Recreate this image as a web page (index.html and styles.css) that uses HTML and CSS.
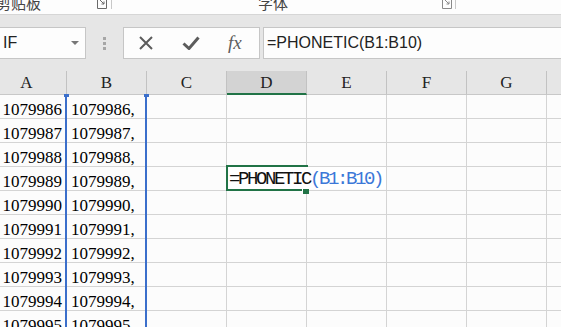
FILE: index.html
```html
<!DOCTYPE html>
<html lang="zh-CN">
<head>
    <meta charset="UTF-8">
    <title>PHONETIC</title>
    <link rel="stylesheet" href="styles.css">
</head>
<body>
    <div class="ribbon">
        <div class="group group-clip">
            <span class="group-label">剪贴板</span>
            <svg class="launcher" width="10" height="9" viewBox="0 0 10 9"><path d="M0.5 0 V8.5 H9.5 V0 M3 0 L7 4 M7 1.5 V4 H4.5" fill="none" stroke="#6a6a6a" stroke-width="1"/></svg>
            <span class="sep"></span>
        </div>
        <div class="group group-font">
            <span class="group-label">字体</span>
            <svg class="launcher" width="10" height="9" viewBox="0 0 10 9"><path d="M0.5 0 V8.5 H9.5 V0 M3 0 L7 4 M7 1.5 V4 H4.5" fill="none" stroke="#8a8a8a" stroke-width="1"/></svg>
            <span class="sep"></span>
        </div>
    </div>

    <div class="formula-bar">
        <div class="name-box">
            <span>IF</span>
            <span class="caret"></span>
        </div>
        <div class="grip"><i></i><i></i><i></i></div>
        <div class="fx-box">
            <svg class="icon-cancel" width="14" height="14" viewBox="0 0 14 14"><path d="M1 1 L13 13 M13 1 L1 13" stroke="#5c5c5c" stroke-width="2"/></svg>
            <svg class="icon-enter" width="18" height="14" viewBox="0 0 18 14"><path d="M1.5 7.5 L7 12.5 L16.5 1.5" fill="none" stroke="#5c5c5c" stroke-width="3"/></svg>
            <span class="fx">fx</span>
        </div>
        <div class="formula-input">=PHONETIC(B1:B10)</div>
    </div>

    <div class="sheet">
        <div class="hd hd-a">A</div>
        <div class="hd">B</div>
        <div class="hd">C</div>
        <div class="hd hd-active">D</div>
        <div class="hd">E</div>
        <div class="hd">F</div>
        <div class="hd">G</div>
        <div class="hd"></div>

        <div class="cell num">1079986</div><div class="cell">1079986,</div><div class="cell"></div><div class="cell"></div><div class="cell"></div><div class="cell"></div><div class="cell"></div><div class="cell"></div>
        <div class="cell num">1079987</div><div class="cell">1079987,</div><div class="cell"></div><div class="cell"></div><div class="cell"></div><div class="cell"></div><div class="cell"></div><div class="cell"></div>
        <div class="cell num">1079988</div><div class="cell">1079988,</div><div class="cell"></div><div class="cell"></div><div class="cell"></div><div class="cell"></div><div class="cell"></div><div class="cell"></div>
        <div class="cell num">1079989</div><div class="cell">1079989,</div><div class="cell"></div><div class="cell"></div><div class="cell"></div><div class="cell"></div><div class="cell"></div><div class="cell"></div>
        <div class="cell num">1079990</div><div class="cell">1079990,</div><div class="cell"></div><div class="cell"></div><div class="cell"></div><div class="cell"></div><div class="cell"></div><div class="cell"></div>
        <div class="cell num">1079991</div><div class="cell">1079991,</div><div class="cell"></div><div class="cell"></div><div class="cell"></div><div class="cell"></div><div class="cell"></div><div class="cell"></div>
        <div class="cell num">1079992</div><div class="cell">1079992,</div><div class="cell"></div><div class="cell"></div><div class="cell"></div><div class="cell"></div><div class="cell"></div><div class="cell"></div>
        <div class="cell num">1079993</div><div class="cell">1079993,</div><div class="cell"></div><div class="cell"></div><div class="cell"></div><div class="cell"></div><div class="cell"></div><div class="cell"></div>
        <div class="cell num">1079994</div><div class="cell">1079994,</div><div class="cell"></div><div class="cell"></div><div class="cell"></div><div class="cell"></div><div class="cell"></div><div class="cell"></div>
        <div class="cell num">1079995</div><div class="cell">1079995,</div><div class="cell"></div><div class="cell"></div><div class="cell"></div><div class="cell"></div><div class="cell"></div><div class="cell"></div>

        <!-- range B1:B10 referenced by the formula -->
        <div class="range"></div>

        <!-- cell D4 in edit mode -->
        <div class="edit">
            <div class="edit-text">=PHONETIC<span class="ref">(B1:B10)</span></div>
        </div>
        <div class="fill-handle"></div>
    </div>
</body>
</html>
```

FILE: styles.css
```css
body {
    margin: 0;
    width: 561px;
    height: 327px;
    overflow: hidden;
    background-color: #e6e6e6;
    font-family: "Liberation Sans", Arial, sans-serif;
}

/* ribbon strip (cut off at the top) */
.ribbon {
    display: flex;
    height: 14px;
    background: #fdfdfd;
    border-bottom: 1px solid #d6d6d6;
    overflow: hidden;
}

.group {
    display: flex;
    align-items: flex-start;
    height: 14px;
}

.group-clip {
    width: 112px;
}

.group-font {
    width: 344px;
    padding-left: 146px;
    box-sizing: border-box;
}

.group-label {
    margin-top: -7px;
    font-family: "Noto Sans CJK SC", sans-serif;
    font-size: 15px;
    line-height: 20px;
    color: #444;
    white-space: nowrap;
}

.group-clip .group-label {
    margin-left: -4px;
}

.launcher {
    margin-left: auto;
    margin-right: 4px;
}

.group-font .launcher {
    margin-right: 3px;
}

.sep {
    width: 1px;
    height: 9px;
    background: #c8c8c8;
}

/* formula bar */
.formula-bar {
    display: flex;
    padding: 12px 0;
    height: 32px;
}

.name-box,
.fx-box,
.formula-input {
    box-sizing: border-box;
    height: 32px;
    background: #fdfdfd;
    border: 1px solid #c6c6c6;
}

.name-box {
    display: flex;
    align-items: center;
    width: 87px;
    margin-left: -1px;
    padding-left: 3px;
    font-size: 16px;
    color: #222;
}

.caret {
    margin-left: auto;
    margin-right: 6px;
    border-left: 4px solid transparent;
    border-right: 4px solid transparent;
    border-top: 4px solid #777;
}

.grip {
    width: 37px;
    display: flex;
    flex-direction: column;
    align-items: center;
    justify-content: center;
    gap: 2px;
}

.grip i {
    width: 3px;
    height: 3px;
    background: #a6a6a6;
}

.fx-box {
    display: flex;
    align-items: center;
    width: 137px;
    padding-left: 15px;
}

.icon-enter {
    margin-left: 29px;
}

.fx {
    margin-left: 28px;
    font-family: "Liberation Serif", serif;
    font-style: italic;
    font-size: 19px;
    color: #5e5e5e;
}

.formula-input {
    flex: 1;
    margin-left: 3px;
    margin-right: -2px;
    padding-left: 3px;
    font-size: 16px;
    line-height: 30px;
    color: #222;
    white-space: nowrap;
}

/* worksheet grid */
.sheet {
    position: relative;
    display: grid;
    grid-template-columns: 67px repeat(7, 80px);
    grid-auto-rows: 24px;
    height: 256px;
    overflow: hidden;
    background: #fcfcfc;
    font-family: "Liberation Serif", serif;
}

.hd {
    box-sizing: border-box;
    background: #e6e6e6;
    border-right: 1px solid #c2c2c2;
    border-bottom: 1px solid #c8c8c8;
    text-align: center;
    font-size: 17px;
    line-height: 24px;
    color: #222;
}

.hd-a {
    padding-right: 13px;
}

.hd-active {
    background: #d3d3d3;
    border-bottom: 2px solid #217346;
}

.cell {
    box-sizing: border-box;
    border-right: 1px solid #d4d4d4;
    border-bottom: 1px solid #d4d4d4;
    padding-left: 4px;
    font-size: 17px;
    line-height: 30px;
    color: #000;
    white-space: nowrap;
}

.cell.num {
    text-align: right;
    padding-left: 0;
    padding-right: 4px;
}

.range {
    position: absolute;
    left: 65px;
    top: 24px;
    width: 82px;
    bottom: 0;
    box-sizing: border-box;
    border-left: 2px solid #3b6fcb;
    border-right: 2px solid #3b6fcb;
}

.range::before,
.range::after {
    content: "";
    position: absolute;
    top: -1px;
    width: 5px;
    height: 3px;
    background: #3b6fcb;
}

.range::before {
    left: -3px;
}

.range::after {
    right: -4px;
}

.edit {
    position: absolute;
    left: 226px;
    top: 94px;
    width: 82px;
    height: 26px;
    box-sizing: border-box;
    border: 2px solid #217346;
    border-right: none;
}

.edit-text {
    position: absolute;
    left: 1px;
    top: 0;
    height: 22px;
    box-sizing: border-box;
    padding-top: 2px;
    padding-right: 4px;
    background: #fff;
    font-family: "Liberation Mono", monospace;
    font-size: 19px;
    letter-spacing: -2.4px;
    line-height: 21px;
    color: #111;
    white-space: nowrap;
}

.ref {
    color: #3c78d8;
}

.fill-handle {
    position: absolute;
    left: 302px;
    top: 117px;
    width: 6px;
    height: 5px;
    background: #217346;
    border-left: 1px solid #fff;
    border-top: 1px solid #fff;
}
```
